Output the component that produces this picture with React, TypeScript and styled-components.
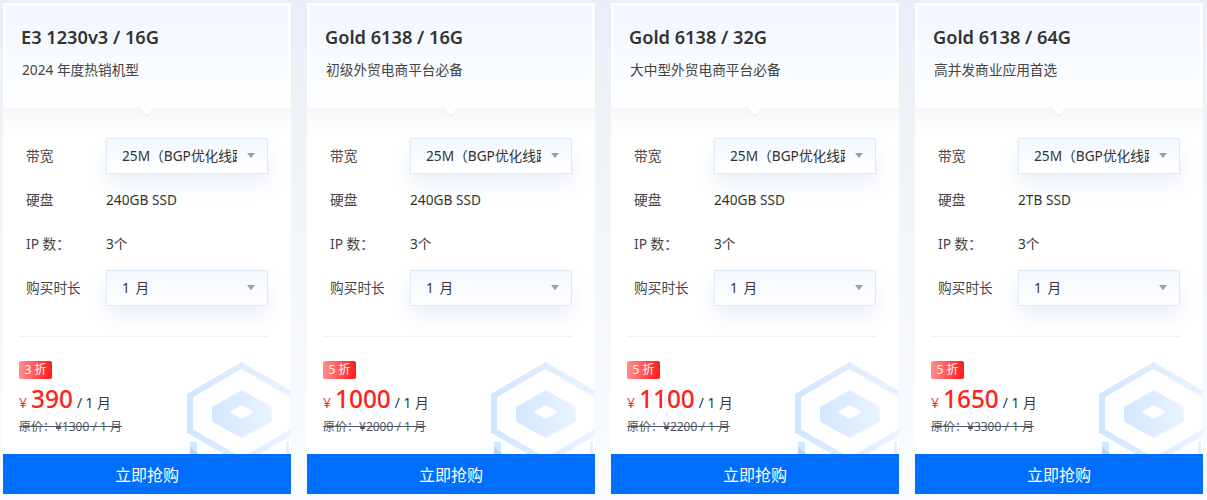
import styled, { createGlobalStyle } from "styled-components";

const GlobalStyle = createGlobalStyle`
  html, body {
    margin: 0;
    padding: 0;
    background: #fff;
  }
  body {
    font-family: "Noto Sans", "Noto Sans CJK SC", sans-serif;
    color: #333;
  }
`;

const Page = styled.div`
  width: 1207px;
  height: 500px;
  box-sizing: border-box;
  padding: 3px 0 0 3px;
  overflow: hidden;
  display: flex;
  gap: 16px;
  background: linear-gradient(180deg, #e9eff8 0%, #f3f6fb 50%, #fafcff 100%);
`;

const Card = styled.section`
  width: 288px;
  height: 491px;
  flex: none;
  display: flex;
  flex-direction: column;
  position: relative;
  overflow: hidden;
  background: #fff;
`;

const Header = styled.header`
  height: 102px;
  margin: 3px 3px 0;
  box-sizing: border-box;
  padding: 19px 16px 0;
  background: linear-gradient(180deg, #f0f7ff 0%, #ffffff 100%);
  position: relative;
  z-index: 1;
  flex: none;
  &::after {
    content: "";
    position: absolute;
    left: 135px;
    bottom: -6px;
    width: 11px;
    height: 11px;
    background: #fff;
    border-right: 1px solid #eeeeef;
    border-bottom: 1px solid #eeeeef;
    transform: rotate(45deg);
  }
`;

const Title = styled.h3`
  margin: 0 0 0 -1px;
  font-size: 18.2px;
  line-height: 25px;
  font-weight: 600;
  color: #333;
`;

const Subtitle = styled.p`
  margin: 10px 0 0;
  font-size: 13.7px;
  line-height: 20px;
  color: #444;
`;

const Specs = styled.div`
  flex: none;
  height: 229px;
  box-sizing: border-box;
  margin: 0 23px 0 16px;
  padding: 30px 0 0 7px;
  display: flex;
  flex-direction: column;
  gap: 8px;
  border-bottom: 1px solid #eef0f4;
  &::before {
    content: "";
    position: absolute;
    left: 0;
    right: 0;
    top: 105px;
    height: 24px;
    background: linear-gradient(180deg, #f6f6f7 0%, #ffffff 100%);
  }
`;

const Row = styled.div`
  height: 36px;
  display: flex;
  align-items: center;
  position: relative;
  font-size: 13.7px;
`;

const Label = styled.span`
  width: 80px;
  flex: none;
  padding-bottom: 2px;
  color: #444;
`;

const Value = styled.span`
  padding-bottom: 2px;
  color: #333;
`;

const Select = styled.div`
  width: 162px;
  height: 36px;
  box-sizing: border-box;
  padding: 0 30px 2px 15px;
  flex: none;
  display: flex;
  align-items: center;
  position: relative;
  font-size: 13.7px;
  color: #333;
  white-space: nowrap;
  text-spacing-trim: space-all;
  border: 1px solid #dce8f5;
  background: linear-gradient(180deg, #f3f9ff 0%, #ffffff 100%);
  box-shadow: 0 10px 20px rgba(90, 130, 190, 0.13);
  &::after {
    content: "";
    position: absolute;
    right: 12px;
    top: 14px;
    border-style: solid;
    border-width: 5px 4.5px 0;
    border-color: #9b9ea3 transparent transparent;
  }
`;

const SelectText = styled.span<{ $spaced?: boolean }>`
  display: block;
  width: 100%;
  overflow: hidden;
  letter-spacing: ${(p) => (p.$spaced ? "1px" : "0")};
`;

const Pricing = styled.div`
  flex: 1;
  position: relative;
  padding: 24px 16px 0;
  min-height: 0;
`;

const Discount = styled.span`
  display: block;
  width: 33px;
  height: 18px;
  border-radius: 2px;
  text-align: center;
  font-size: 12px;
  line-height: 18px;
  color: #fff;
  background: linear-gradient(90deg, #ff8f8f 0%, #ff1a1a 100%);
`;

const PriceLine = styled.div`
  margin-top: 3px;
  height: 32px;
  display: flex;
  align-items: baseline;
  font-size: 13.8px;
  color: #333;
`;

const Currency = styled.span`
  color: #ff2a2a;
  font-size: 14px;
  margin-right: 4px;
`;

const Amount = styled.span`
  color: #ff2020;
  font-size: 24.4px;
  font-weight: 500;
  margin-right: 4px;
`;

const Original = styled.div`
  margin-top: 4px;
  font-size: 12px;
  line-height: 18px;
  color: #4f5661;
  text-decoration: line-through;
`;

const Watermark = styled.svg`
  position: absolute;
  right: 0;
  top: 25px;
  width: 104px;
  height: 92px;
`;

const BuyButton = styled.button`
  flex: none;
  height: 40px;
  border: 0;
  padding: 0;
  margin: 0;
  width: 100%;
  font-family: inherit;
  font-size: 16px;
  color: #fff;
  background: #006eff;
`;

const plans = [
  { name: "E3 1230v3 / 16G", tag: "2024 年度热销机型", disk: "240GB SSD", off: "3 折", price: "390", old: "¥1300" },
  { name: "Gold 6138 / 16G", tag: "初级外贸电商平台必备", disk: "240GB SSD", off: "5 折", price: "1000", old: "¥2000" },
  { name: "Gold 6138 / 32G", tag: "大中型外贸电商平台必备", disk: "240GB SSD", off: "5 折", price: "1100", old: "¥2200" },
  { name: "Gold 6138 / 64G", tag: "高并发商业应用首选", disk: "2TB SSD", off: "5 折", price: "1650", old: "¥3300" },
];

// viewBox is in page pixels of the first card, the mark sits in its lower right corner
function Mark() {
  return (
    <Watermark viewBox="187 362 104 92" fill="none">
      <defs>
        <linearGradient id="markFill" x1="0" y1="0" x2="1" y2="0">
          <stop offset="0" stopColor="#d2e7fe" />
          <stop offset="1" stopColor="#e8f3ff" />
        </linearGradient>
        <linearGradient id="markLine" gradientUnits="userSpaceOnUse" x1="187" y1="400" x2="291" y2="400">
          <stop offset="0" stopColor="#d0e6fe" />
          <stop offset="1" stopColor="#e9f3ff" />
        </linearGradient>
      </defs>
      <path
        d="M190 395.5 L241.7 365.5 L293.5 395.5 V431 L241.7 461 L190 431 Z"
        stroke="url(#markLine)"
        strokeWidth="6"
      />
      <path d="M241.7 390 L271.7 407 V421.7 L241.7 438 L212 421.7 V407 Z" fill="url(#markFill)" />
      <path d="M241.7 405 L254 412 L241.7 419 L230 412 Z" fill="#fff" />
      <path d="M190 442 H197 V454 H190 Z" fill="#d3e7fd" />
      <path d="M190 446 L198 454 H190 Z" fill="#b5d8fb" />
      <path d="M286 442 H289 V454 H286 Z" fill="#e3effd" />
    </Watermark>
  );
}

export default function App() {
  return (
    <>
      <GlobalStyle />
      <Page>
        {plans.map((plan) => (
          <Card key={plan.name}>
            <Header>
              <Title>{plan.name}</Title>
              <Subtitle>{plan.tag}</Subtitle>
            </Header>
            <Specs>
              <Row>
                <Label>带宽</Label>
                <Select>
                  <SelectText>25M（BGP优化线路）</SelectText>
                </Select>
              </Row>
              <Row>
                <Label>硬盘</Label>
                <Value>{plan.disk}</Value>
              </Row>
              <Row>
                <Label>IP 数：</Label>
                <Value>3个</Value>
              </Row>
              <Row>
                <Label>购买时长</Label>
                <Select>
                  <SelectText $spaced>1 月</SelectText>
                </Select>
              </Row>
            </Specs>
            <Pricing>
              <Mark />
              <Discount>{plan.off}</Discount>
              <PriceLine>
                <Currency>¥</Currency>
                <Amount>{plan.price}</Amount>
                <span>/ 1 月</span>
              </PriceLine>
              <Original>原价：{plan.old} / 1 月</Original>
            </Pricing>
            <BuyButton>立即抢购</BuyButton>
          </Card>
        ))}
      </Page>
    </>
  );
}
